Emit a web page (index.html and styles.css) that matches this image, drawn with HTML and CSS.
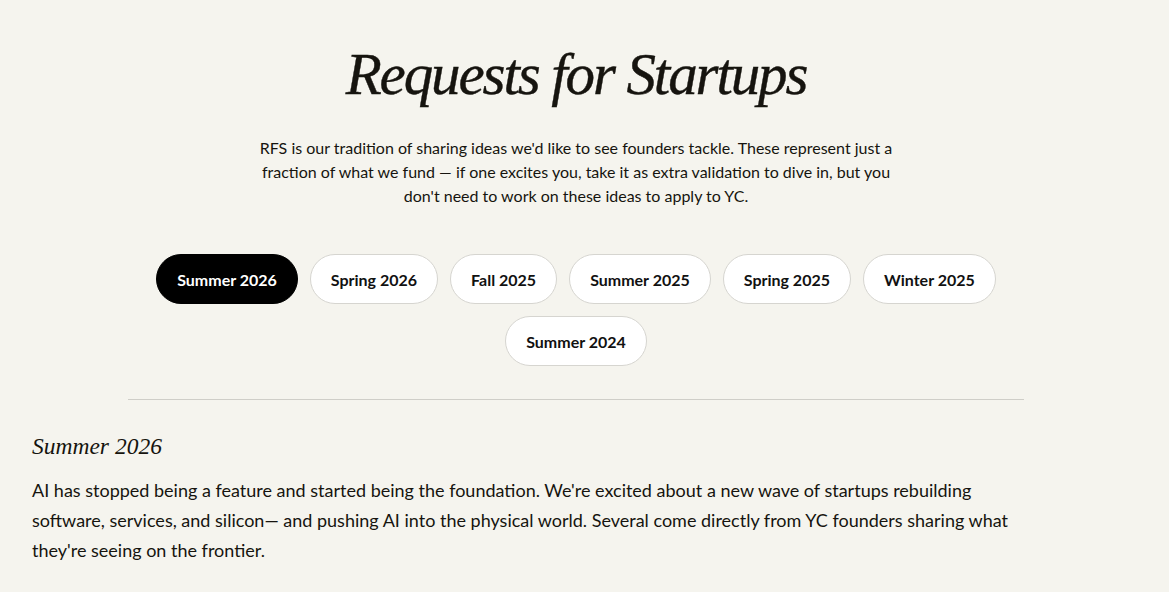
FILE: index.html
```html
<!DOCTYPE html>
<html lang="en">
<head>
<meta charset="utf-8">
<title>Requests for Startups</title>
<link rel="stylesheet" href="styles.css">
</head>
<body>
<div class="page">
  <header class="hero">
    <h1 class="title">Requests for Startups</h1>
    <p class="intro">RFS is our tradition of sharing ideas we'd like to see founders tackle. These represent just a fraction of what we fund — if one excites you, take it as extra validation to dive in, but you don't need to work on these ideas to apply to YC.</p>
    <nav class="pills">
      <a class="pill active">Summer 2026</a>
      <a class="pill">Spring 2026</a>
      <a class="pill">Fall 2025</a>
      <a class="pill">Summer 2025</a>
      <a class="pill">Spring 2025</a>
      <a class="pill">Winter 2025</a>
      <a class="pill">Summer 2024</a>
    </nav>
  </header>
  <hr class="divider">
  <section class="batch">
    <h2 class="batch-title">Summer 2026</h2>
    <p class="batch-text">AI has stopped being a feature and started being the foundation. We're excited about a new wave of startups rebuilding software, services, and silicon— and pushing AI into the physical world. Several come directly from YC founders sharing what they're seeing on the frontier.</p>
  </section>
</div>
</body>
</html>
```
FILE: styles.css
```css
html, body {
  margin: 0;
  padding: 0;
  background: #f5f4ee;
  color: #16140f;
  font-family: Lato, "Noto Sans", sans-serif;
}
.page {
  width: 1152px;
  overflow: hidden;
}
.hero {
  display: flex;
  flex-direction: column;
  align-items: center;
  padding-top: 38px;
}
.title {
  margin: 0;
  font-family: "Liberation Serif", serif;
  font-style: italic;
  font-weight: 400;
  font-size: 59px;
  line-height: 72px;
  letter-spacing: -2.1px;
  -webkit-text-stroke: 0.4px #16140f;
}
.intro {
  margin: 26px 0 0;
  width: 650px;
  text-align: center;
  font-size: 16px;
  line-height: 24px;
}
.pills {
  margin-top: 46px;
  display: flex;
  flex-wrap: wrap;
  justify-content: center;
  gap: 12px;
  width: 880px;
}
.pill {
  height: 50px;
  box-sizing: border-box;
  padding: 0 20px;
  display: flex;
  align-items: center;
  border: 1px solid #d6d5d0;
  border-radius: 25px;
  background: #fff;
  color: #111;
  font-size: 16px;
  font-weight: 700;
}
.pill.active {
  background: #000;
  border-color: #000;
  color: #fff;
}
.divider {
  margin: 33px auto 0;
  width: 896px;
  border: 0;
  border-top: 1px solid #cfcec8;
}
.batch {
  padding: 31px 32px 0;
}
.batch-title {
  margin: 0;
  font-family: "Liberation Serif", serif;
  font-style: italic;
  font-weight: 400;
  font-size: 23.5px;
  line-height: 30px;
}
.batch-text {
  margin: 14px 0 0;
  max-width: 1000px;
  font-size: 18px;
  line-height: 30px;
}
```
